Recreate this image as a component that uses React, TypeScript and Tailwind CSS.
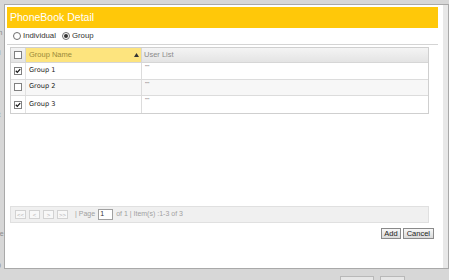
import React from 'react';

const groups = [
  { name: 'Group 1', checked: true },
  { name: 'Group 2', checked: false },
  { name: 'Group 3', checked: true },
];

const Check = ({ checked }: { checked: boolean }) => (
  <span className="flex h-[8px] w-[8px] items-center justify-center border border-[#808080] bg-white">
    {checked && (
      <svg width="6" height="6" viewBox="0 0 6 6">
        <path d="M0.8 2.8 L2.3 4.4 L5.2 1.1" stroke="#1a1a1a" strokeWidth="1.3" fill="none" />
      </svg>
    )}
  </span>
);

const Radio = ({ on }: { on: boolean }) => (
  <span className="flex h-[8px] w-[8px] items-center justify-center rounded-full border border-[#6e6e6e] bg-white">
    {on && <span className="h-[4px] w-[4px] rounded-full bg-[#333]" />}
  </span>
);

const PagerBtn = ({ label }: { label: string }) => (
  <span className="flex h-[9px] w-[11px] items-center justify-center border border-[#d2d2d2] bg-[#f8f8f8] text-[6px] leading-none text-[#b5b5b5]">
    {label}
  </span>
);

const App = () => {
  return (
    <div className="relative h-[280px] w-[449px] overflow-hidden bg-[#d7d7d7] font-['Liberation_Sans',Arial,sans-serif]">
      {/* page behind the dialog */}
      <div className="flex h-full flex-col text-[7px] text-[#8a8a8a]">
        <span className="-ml-[5px] mt-[28px]">ch</span>
        <span className="-ml-[5px] mt-[9px]">ei</span>
        <span className="-ml-[5px] mt-[52px]">st</span>
        <span className="-ml-[5px] mt-[108px]">Se</span>
        <span className="-ml-[5px] mt-[10px]">,</span>
        <span className="-ml-[5px] mt-[1px]">.0</span>
        <div className="mt-auto flex gap-[6px] pl-[340px]">
          <span className="h-[4px] w-[34px] border border-b-0 border-[#b8b8b8] bg-[#e6e6e6]" />
          <span className="h-[4px] w-[25px] border border-b-0 border-[#b8b8b8] bg-[#e6e6e6]" />
        </div>
      </div>

      {/* dialog */}
      <div className="absolute left-[4px] top-[4px] flex h-[265px] w-[445px] border border-[#a9a9a9] bg-[#e8e8e8] pr-[5px]">
        <div className="flex flex-1 flex-col bg-white px-[2px] pt-[2px]">
          <div className="mr-[3px] flex h-[21px] items-center bg-[#ffc809] pl-[3px] text-[10.5px] text-white">
            PhoneBook Detail
          </div>

          <div className="flex h-[16px] items-center gap-[2px] pl-[6px] text-[7.8px] text-[#333]">
            <Radio on={false} />
            <span className="mr-[4px]">Individual</span>
            <Radio on />
            <span>Group</span>
          </div>
          <div className="mr-[3px] h-px bg-[#d4d4d4]" />

          <div className="ml-[3px] mr-[12px] mt-[2px] flex h-[67px] flex-col border border-[#cfcfcf]">
            <div className="grid h-[15px] grid-cols-[15px_116px_1fr] border-b border-[#d6d6d6] bg-gradient-to-b from-[#f4f4f4] to-[#e4e4e4] text-[7.5px]">
              <div className="flex items-center justify-center border-r border-[#d6d6d6]">
                <Check checked={false} />
              </div>
              <div className="flex items-center justify-between border-r border-[#d6d6d6] bg-[#fde47e] pl-[3px] pr-[2px] text-[#9a8a3a]">
                <span>Group Name</span>
                <svg width="5" height="4" viewBox="0 0 5 4">
                  <path d="M2.5 0 L5 4 L0 4 Z" fill="#333" />
                </svg>
              </div>
              <div className="flex items-center pl-[2px] text-[#8c8c8c]">User List</div>
            </div>
            {groups.map((g, i) => (
              <div
                key={g.name}
                className={`grid h-[17px] grid-cols-[15px_116px_1fr] text-[6.6px] ${
                  i < groups.length - 1 ? 'border-b border-[#dcdcdc]' : ''
                } ${i === 1 ? 'bg-[#f7f7f7]' : 'bg-white'}`}
              >
                <div className="flex items-center justify-center border-r border-[#e2e2e2]">
                  <Check checked={g.checked} />
                </div>
                <div className="flex items-center border-r border-[#dcdcdc] pl-[3px] font-['DejaVu_Sans',sans-serif] text-[#222]">
                  {g.name}
                </div>
                <div className="pl-[3px] pt-[1px] text-[6px] leading-[6px] text-[#777]">""</div>
              </div>
            ))}
          </div>

          <div className="ml-[3px] mr-[12px] mt-[92px] flex h-[17px] items-center gap-[3px] border border-[#e0e0e0] bg-[#f0f0f0] pl-[4px] text-[7px] text-[#a0a0a0]">
            <PagerBtn label="<<" />
            <PagerBtn label="<" />
            <PagerBtn label=">" />
            <PagerBtn label=">>" />
            <span className="ml-[4px]">| Page</span>
            <span className="flex h-[11px] w-[15px] items-center border border-[#a0a0a0] bg-white pl-[1px] text-[#333]">1</span>
            <span>of 1 | Item(s) :1-3 of 3</span>
          </div>

          <div className="mr-[7px] mt-[5px] flex justify-end gap-[2px] text-[7.5px] text-[#222]">
            <button className="flex h-[11px] items-center border border-[#8a8a8a] bg-gradient-to-b from-[#f8f8f8] to-[#dadada] px-[2px] leading-none">
              Add
            </button>
            <button className="flex h-[11px] items-center border border-[#8a8a8a] bg-gradient-to-b from-[#f8f8f8] to-[#dadada] px-[3px] leading-none">
              Cancel
            </button>
          </div>
        </div>
      </div>
    </div>
  );
};

export default App;
